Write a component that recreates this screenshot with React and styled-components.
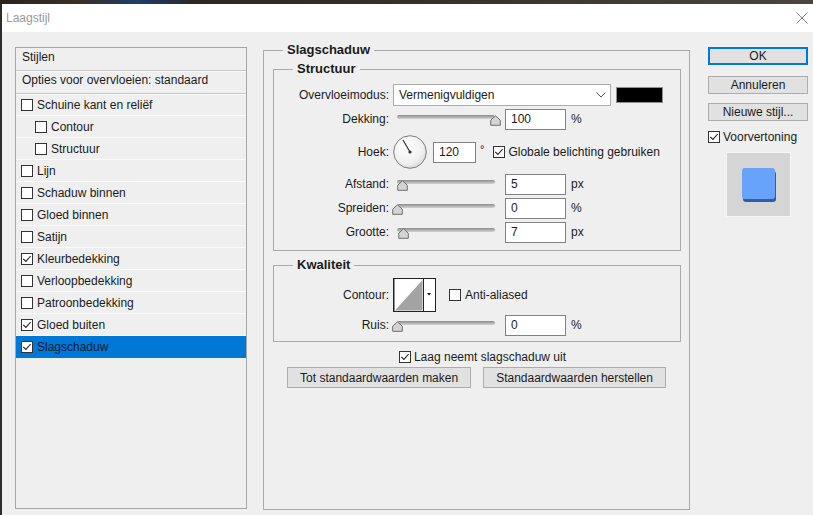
import React from "react";
import styled, { createGlobalStyle } from "styled-components";

const FONT = `"Liberation Sans", Arial, sans-serif`;

const GlobalStyle = createGlobalStyle`
  html, body { margin: 0; padding: 0; background: #efefef; }
  body { font-family: ${FONT}; font-size: 12px; color: #1b1b1b; }
  *, *::before, *::after { box-sizing: border-box; }
`;

const Page = styled.div`
  width: 813px;
  height: 515px;
  display: flex;
  flex-direction: column;
  overflow: hidden;
`;

const TopStrip = styled.div`
  height: 4px;
  flex: none;
  background: linear-gradient(90deg, #2a241f 0%, #3b3026 10%, #1d3e66 17%, #2c2824 24%, #3a342e 60%, #4a4540 100%);
`;

const Dialog = styled.div`
  flex: 1;
  display: flex;
  flex-direction: column;
  border-left: 2px solid #2f2c2a;
  background: #efefef;
`;

const TitleBar = styled.div`
  height: 28px;
  flex: none;
  background: #ffffff;
  display: flex;
  align-items: center;
  justify-content: space-between;
  padding: 0 5px 0 4px;
`;

const Title = styled.span`
  color: #9a9a9a;
  font-size: 12px;
`;

const Body = styled.div`
  flex: 1;
  display: flex;
  align-items: flex-start;
  padding: 15px 0 0 13px;
`;

/* ---------- left list ---------- */
const ListPanel = styled.div`
  width: 232px;
  height: 462px;
  flex: none;
  border: 1px solid #a7a7a7;
  display: flex;
  flex-direction: column;
`;

const HeaderItem = styled.div`
  height: 23px;
  display: flex;
  align-items: center;
  padding: 0 0 5px 6px;
  border-bottom: 1px solid #c6c6c6;
  box-shadow: 0 1px 0 #fbfbfb;
`;

const ListItem = styled.div`
  height: 22px;
  display: flex;
  align-items: center;
  padding-left: ${(p) => (p.$indent ? 19 : 5)}px;
  border-bottom: 1px solid ${(p) => (p.$selected ? "#0078d7" : "#fafafa")};
  background: ${(p) => (p.$selected ? "#0078d7" : "transparent")};
  color: ${(p) => (p.$selected ? "#0c1a2e" : "#1b1b1b")};
`;

/* ---------- checkbox ---------- */
const Box = styled.span`
  width: 12px;
  height: 12px;
  flex: none;
  border: 1px solid #333333;
  background: #ffffff;
  display: inline-flex;
  align-items: center;
  justify-content: center;
  margin-right: ${(p) => (p.$mr != null ? p.$mr : 3)}px;
  margin-left: ${(p) => p.$ml || 0}px;
`;

const Check = ({ checked, mr, ml }) => (
  <Box $mr={mr} $ml={ml}>
    {checked && (
      <svg width="10" height="10" viewBox="0 0 10 10">
        <polyline points="1.3,4.8 3.9,7.4 8.7,2" fill="none" stroke="#222" strokeWidth="1.1" />
      </svg>
    )}
  </Box>
);

/* ---------- groups ---------- */
const Fieldset = styled.fieldset`
  margin: 0;
  padding: 0;
  min-width: 0;
  border: 1px solid #a9a9a9;
`;

const MainGroup = styled(Fieldset)`
  margin: -4px 0 0 16px;
  width: 427px;
  height: 467px;
  flex: none;
`;

const SubGroup = styled(Fieldset)`
  margin: ${(p) => p.$mt}px 8px 0 9px;
  padding: 0 0 ${(p) => p.$pb}px 0;
`;

const Legend = styled.legend`
  margin-left: 19px;
  padding: 0 4px;
  font-weight: bold;
  font-size: 13px;
  line-height: 14px;
  color: #1b1b1b;
`;

const Row = styled.div`
  display: flex;
  align-items: center;
  height: ${(p) => p.$h || 22}px;
  margin-top: ${(p) => p.$mt || 0}px;
`;

const Label = styled.span`
  width: 115px;
  flex: none;
  text-align: right;
`;

const Select = styled.div`
  width: 218px;
  height: 22px;
  margin-left: 4px;
  background: #ffffff;
  border: 1px solid #acacac;
  display: flex;
  align-items: center;
  justify-content: space-between;
  padding: 0 4px 0 5px;
`;

const Swatch = styled.div`
  width: 47px;
  height: 16px;
  margin-left: 5px;
  background: #000000;
  border: 1px solid #8f8f8f;
`;

const Field = styled.div`
  width: ${(p) => p.$w || 61}px;
  height: 21px;
  margin-left: ${(p) => p.$ml || 6}px;
  background: #ffffff;
  border: 1px solid #828282;
  padding-left: 5px;
  display: flex;
  align-items: center;
`;

const Unit = styled.span`
  margin-left: ${(p) => p.$ml || 5}px;
`;

const Degree = styled.span`
  margin-left: 4px;
  align-self: flex-start;
  margin-top: 9px;
  font-size: 11px;
`;

const SliderBox = styled.div`
  position: relative;
  width: 106px;
  height: 22px;
  margin-left: 4px;
  padding: 7px 4px 0;
`;

const Track = styled.div`
  height: 4px;
  border-radius: 2px;
  background: linear-gradient(to bottom, #8a8a8a, #b3b3b3 55%, #d2d2d2);
`;

const Thumb = styled.svg`
  position: absolute;
  top: 7px;
`;

const Slider = ({ pct }) => (
  <SliderBox>
    <Track />
    <Thumb width="11" height="11" viewBox="0 0 11 11" style={{ left: `${4 + pct * 98 - 5.5}px` }}>
      <path d="M5.5 0.8 L10.3 5.2 L10.3 10.3 L0.7 10.3 L0.7 5.2 Z" fill="#d4d4d4" stroke="#6f6f6f" strokeWidth="1" strokeLinejoin="round" />
    </Thumb>
  </SliderBox>
);

const Dial = styled.svg`
  margin-left: 4px;
  flex: none;
`;

const ContourThumb = styled.svg`
  margin-left: 4px;
  flex: none;
`;

const CenterRow = styled.div`
  display: flex;
  align-items: center;
  justify-content: center;
  height: ${(p) => p.$h}px;
  margin-top: ${(p) => p.$mt}px;
  padding-left: ${(p) => p.$pl || 0}px;
  gap: ${(p) => p.$gap || 0}px;
`;

const Button = styled.button`
  font: inherit;
  font-size: 12px;
  color: #1b1b1b;
  background: #e1e1e1;
  border: ${(p) => (p.$default ? "2px solid #0078d7" : "1px solid #adadad")};
  height: ${(p) => p.$h || 21}px;
  width: ${(p) => (p.$block ? "100%" : "auto")};
  margin-top: ${(p) => p.$mt || 0}px;
  padding: 0 12px;
  display: flex;
  align-items: center;
  justify-content: center;
  line-height: 1;
  flex: none;
`;

/* ---------- right column ---------- */
const RightCol = styled.div`
  width: 100px;
  flex: none;
  margin-left: 18px;
  display: flex;
  flex-direction: column;
`;

const CheckLine = styled.div`
  display: flex;
  align-items: center;
  height: 14px;
  margin-top: ${(p) => p.$mt || 0}px;
`;

const Preview = styled.div`
  width: 65px;
  height: 65px;
  margin: 8px 0 0 18px;
  background: #d5d5d5;
  border: 1px solid #f6f6f6;
  display: flex;
  align-items: center;
  justify-content: center;
`;

const PreviewSquare = styled.div`
  width: 33px;
  height: 31px;
  margin: -3px 0 0 -1px;
  border-radius: 3px;
  background: #67a3fb;
  box-shadow: 1px 3px 0 #2f5f9f;
`;

const listItems = [
  { t: "Schuine kant en reliëf" },
  { t: "Contour", indent: true },
  { t: "Structuur", indent: true },
  { t: "Lijn" },
  { t: "Schaduw binnen" },
  { t: "Gloed binnen" },
  { t: "Satijn" },
  { t: "Kleurbedekking", c: true },
  { t: "Verloopbedekking" },
  { t: "Patroonbedekking" },
  { t: "Gloed buiten", c: true },
  { t: "Slagschaduw", c: true, sel: true },
];

export default function App() {
  return (
    <>
      <GlobalStyle />
      <Page>
        <TopStrip />
        <Dialog>
          <TitleBar>
            <Title>Laagstijl</Title>
            <svg width="12" height="12" viewBox="0 0 12 12">
              <path d="M0.5 0.5 L11.5 11.5 M11.5 0.5 L0.5 11.5" stroke="#808080" strokeWidth="1" />
            </svg>
          </TitleBar>
          <Body>
            <ListPanel>
              <HeaderItem>Stijlen</HeaderItem>
              <HeaderItem>Opties voor overvloeien: standaard</HeaderItem>
              {listItems.map((it) => (
                <ListItem key={it.t} $indent={it.indent} $selected={it.sel}>
                  <Check checked={it.c} mr={4} />
                  {it.t}
                </ListItem>
              ))}
            </ListPanel>

            <MainGroup>
              <Legend>Slagschaduw</Legend>
              <SubGroup $mt={5} $pb={7}>
                <Legend>Structuur</Legend>
                <Row $mt={8}>
                  <Label>Overvloeimodus:</Label>
                  <Select>
                    <span>Vermenigvuldigen</span>
                    <svg width="10" height="6" viewBox="0 0 10 6">
                      <polyline points="0.5,0.5 5,5 9.5,0.5" fill="none" stroke="#555" strokeWidth="1" />
                    </svg>
                  </Select>
                  <Swatch />
                </Row>
                <Row $mt={2}>
                  <Label>Dekking:</Label>
                  <Slider pct={1} />
                  <Field>100</Field>
                  <Unit>%</Unit>
                </Row>
                <Row $mt={4} $h={36}>
                  <Label>Hoek:</Label>
                  <Dial width="34" height="34" viewBox="0 0 34 34">
                    <defs>
                      <radialGradient id="dialg" cx="40%" cy="35%" r="70%">
                        <stop offset="0%" stopColor="#ffffff" />
                        <stop offset="70%" stopColor="#f0f0f0" />
                        <stop offset="100%" stopColor="#d6d6d6" />
                      </radialGradient>
                    </defs>
                    <circle cx="17" cy="17" r="16.3" fill="url(#dialg)" stroke="#7d7d7d" strokeWidth="1" />
                    <line x1="17" y1="17" x2="10" y2="5" stroke="#333" strokeWidth="1.2" />
                    <circle cx="17" cy="17" r="1.6" fill="#333" />
                  </Dial>
                  <Field $w={43}>120</Field>
                  <Degree>°</Degree>
                  <Check checked ml={9} mr={3} />
                  <span>Globale belichting gebruiken</span>
                </Row>
                <Row $mt={3}>
                  <Label>Afstand:</Label>
                  <Slider pct={0.06} />
                  <Field>5</Field>
                  <Unit>px</Unit>
                </Row>
                <Row $mt={2}>
                  <Label>Spreiden:</Label>
                  <Slider pct={0} />
                  <Field>0</Field>
                  <Unit>%</Unit>
                </Row>
                <Row $mt={2}>
                  <Label>Grootte:</Label>
                  <Slider pct={0.07} />
                  <Field>7</Field>
                  <Unit>px</Unit>
                </Row>
              </SubGroup>

              <SubGroup $mt={7} $pb={5}>
                <Legend>Kwaliteit</Legend>
                <Row $mt={6} $h={34}>
                  <Label>Contour:</Label>
                  <ContourThumb width="43" height="34" viewBox="0 0 43 34">
                    <rect x="0.5" y="0.5" width="42" height="33" fill="#ffffff" stroke="#222" strokeWidth="1" />
                    <line x1="1" y1="1" x2="1" y2="33" stroke="#222" strokeWidth="1" />
                    <polygon points="2,32.5 29.5,2 29.5,32.5" fill="#a3a3a3" />
                    <line x1="30.5" y1="1" x2="30.5" y2="33" stroke="#222" strokeWidth="1" />
                    <polygon points="34,15 38,15 36,17.5" fill="#111" />
                  </ContourThumb>
                  <Check ml={13} mr={4} />
                  <span>Anti-aliased</span>
                </Row>
                <Row $mt={2}>
                  <Label>Ruis:</Label>
                  <Slider pct={0.01} />
                  <Field>0</Field>
                  <Unit>%</Unit>
                </Row>
              </SubGroup>

              <CenterRow $h={16} $mt={7} $pl={12}>
                <Check checked mr={3} />
                <span>Laag neemt slagschaduw uit</span>
              </CenterRow>
              <CenterRow $h={21} $mt={2} $gap={12}>
                <Button>Tot standaardwaarden maken</Button>
                <Button>Standaardwaarden herstellen</Button>
              </CenterRow>
            </MainGroup>

            <RightCol>
              <Button $block $default $h={18}>OK</Button>
              <Button $block $h={18} $mt={11}>Annuleren</Button>
              <Button $block $h={18} $mt={9}>Nieuwe stijl...</Button>
              <CheckLine $mt={9}>
                <Check checked mr={3} />
                <span>Voorvertoning</span>
              </CheckLine>
              <Preview>
                <PreviewSquare />
              </Preview>
            </RightCol>
          </Body>
        </Dialog>
      </Page>
    </>
  );
}
